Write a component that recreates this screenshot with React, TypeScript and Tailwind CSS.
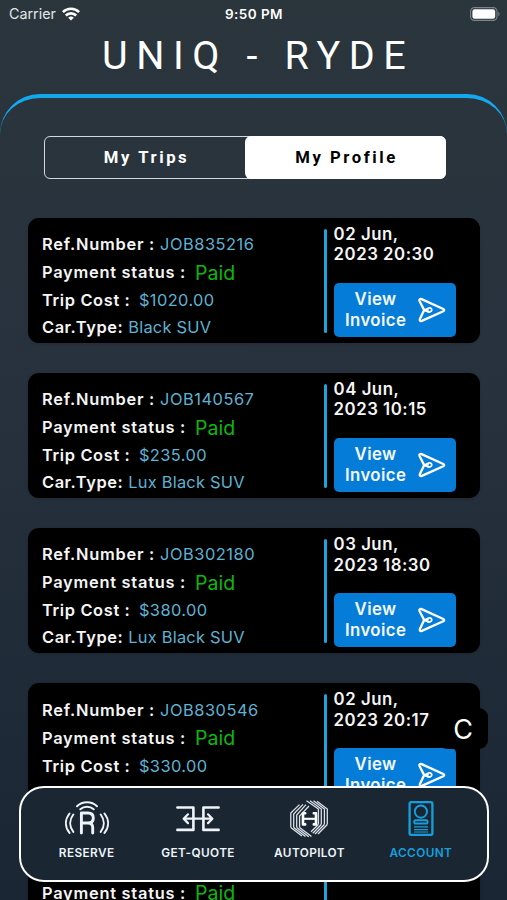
import React from "react";

type Trip = { ref: string; cost: string; car: string; day: string; time: string };

const trips: Trip[] = [
  { ref: "JOB835216", cost: "$1020.00", car: "Black SUV", day: "02 Jun,", time: "2023 20:30" },
  { ref: "JOB140567", cost: "$235.00", car: "Lux Black SUV", day: "04 Jun,", time: "2023 10:15" },
  { ref: "JOB302180", cost: "$380.00", car: "Lux Black SUV", day: "03 Jun,", time: "2023 18:30" },
  { ref: "JOB830546", cost: "$330.00", car: "Black SUV", day: "02 Jun,", time: "2023 20:17" },
  { ref: "JOB830545", cost: "$330.00", car: "Black SUV", day: "02 Jun,", time: "2023 20:15" },
];

function WifiIcon() {
  return (
    <svg className="h-[14px] w-[18px]" viewBox="0 0 18 14" fill="none" stroke="white" strokeWidth="2.6">
      <path d="M0.9 5.1a11.5 11.5 0 0 1 16.2 0" />
      <path d="M3.8 8.5a7.4 7.4 0 0 1 10.4 0" />
      <path d="M9 13.6 6.2 10.8a4 4 0 0 1 5.6 0Z" fill="white" stroke="none" />
    </svg>
  );
}

function BatteryIcon() {
  return (
    <svg className="h-[14px] w-[30px]" viewBox="0 0 30 14" fill="none">
      <rect x="0.6" y="0.6" width="26.4" height="12.8" rx="3.8" stroke="#7d858b" strokeWidth="1.1" />
      <rect x="2.4" y="2.3" width="22.8" height="9.4" rx="2.2" fill="white" />
      <path d="M28.3 4.8c1.7.7 1.7 3.7 0 4.4Z" fill="#7d858b" />
    </svg>
  );
}

function SendIcon() {
  return (
    <svg className="h-[26px] w-[30px]" viewBox="0 0 30 26" fill="none" stroke="white" strokeWidth="2.3" strokeLinejoin="round" strokeLinecap="round">
      <path d="M4.6 2.1 26.3 12c1.2.6 1.2 1.6 0 2.2L4.8 23.9c-1.6.6-2.5-.4-1.9-1.9L7.2 13.1 2.5 4C1.9 2.6 3.1 1.4 4.6 2.1Z" />
      <path d="M7.4 13.1 11.8 11c3.6-.9 4 4 .4 4-2.2 0-2.8-1.8-1.2-2.3M7.4 13.3l4.4 1.6" strokeWidth="1.8" />
    </svg>
  );
}

function ReserveIcon() {
  return (
    <svg className="h-[36px] w-[46px]" viewBox="0 0 46 36" fill="none" stroke="#eef4fa" strokeWidth="2" strokeLinecap="round">
      <path d="M13 5.3c5.4-5.3 14.6-5.3 20 0M16.3 8.2c3.7-3.4 9.7-3.4 13.4 0" />
      <path d="M5.5 12.5c-4.7 6-4.7 13.4 0 19.4M9.3 13.5c-4.1 5.4-4.1 12 0 17.4M40.5 12.5c4.7 6 4.7 13.4 0 19.4M36.7 13.5c4.1 5.4 4.1 12 0 17.4" />
      <path d="M17.4 32V12h6.6c3.3 0 5.3 1.9 5.3 5s-2 5-5.3 5h-6.6M24 22c3.4 0 4.7 1.6 4.7 4.6V32" strokeWidth="2.9" strokeLinejoin="round" />
    </svg>
  );
}

function QuoteIcon() {
  return (
    <svg className="h-[26px] w-[44px]" viewBox="0 0 44 26" fill="none" stroke="#eef4fa" strokeWidth="2.6" strokeLinecap="round" strokeLinejoin="round">
      <path d="M1.4 1.5h16v22.4h-16M42.6 1.5h-15.2v22.4h15.2" />
      <path d="M8 12.7h28M12 8.3 7.6 12.7l4.4 4.4M32 8.3l4.4 4.4-4.4 4.4" strokeWidth="2.2" />
    </svg>
  );
}

function AutopilotIcon() {
  return (
    <svg className="h-[38px] w-[38px]" viewBox="0 0 38 38" fill="none" stroke="#d9e0e7" strokeWidth="1.3">
      <path d="M.8 27.5V13L9.5 4.6M3.7 27.5V14L13 4.4M6.7 27.5V15L16 4.6M9.6 27.5V16L19 6" />
      <path d="M.8 27.5 12 36M3.7 27.5 15.5 36.6M6.7 27.5 18.8 36.8M9.6 27.5 21.5 36.6" />
      <path d="M16.5.8 28.4 9V24.5M20 .8 31.3 9V24.5M23.5.8 34.4 9V24.5M27 1.2 37.3 9V24.5" />
      <path d="M28.4 24.5 21 31.8M31.3 24.5 22.8 33.2M34.4 24.5 25 34M37.3 24.5 28 34" />
      <path d="M15.2 13.2H13v11.2h2.2M23.8 13.2H26v11.2h-2.2" stroke="#fff" strokeWidth="2.6" strokeLinejoin="round" strokeLinecap="round" />
      <path d="M13 18.8h13" stroke="#fff" strokeWidth="2.1" />
    </svg>
  );
}

function AccountIcon() {
  return (
    <svg className="h-[36px] w-[26px]" viewBox="0 0 26 36" fill="none" stroke="#169fdc" strokeWidth="1.9">
      <rect x="1.6" y="1.2" width="22.8" height="32.6" rx="1.5" strokeWidth="2.3" />
      <circle cx="12.9" cy="10.6" r="6.1" />
      <rect x="6.2" y="19.3" width="13.4" height="3.2" rx="1.6" />
      <path d="M6 25.9h14M6 28.6h14M6 31h14" strokeWidth="1.2" />
    </svg>
  );
}

function TripCard({ trip }: { trip: Trip }) {
  return (
    <article className="flex h-[125.6px] shrink-0 rounded-[11px] bg-black pl-[14px] text-[16.4px] shadow-sm">
      <div className="w-[281.6px] pt-[12.6px] text-[#5eb2d3]">
        <p className="h-[28px] leading-[28px] tracking-[0.52px]">
          <span className="mr-[5px] font-semibold tracking-[0.77px] text-[#f5f5f5]">Ref.Number :</span>
          {trip.ref}
        </p>
        <p className="flex h-[28px] items-center leading-[28px]">
          <span className="mr-[9px] font-semibold tracking-[0.75px] text-[#f5f5f5]">Payment status :</span>
          <span className="pt-px text-[19.5px] tracking-[0.05px] text-[#0cb80c]">Paid</span>
        </p>
        <p className="h-[28px] leading-[28px] tracking-[0.4px]">
          <span className="mr-[8.5px] font-semibold tracking-[0.64px] text-[#f5f5f5]">Trip Cost :</span>
          {trip.cost}
        </p>
        <p className="h-[28px] leading-[26px] tracking-[0.25px]">
          <span className="mr-[5px] font-semibold tracking-[0.55px] text-[#f5f5f5]">Car.Type:</span>
          {trip.car}
        </p>
      </div>
      <div className="mt-[11px] h-[104px] w-[3px] shrink-0 rounded-full bg-[#1ba5dc]" />
      <div className="ml-[7px] pt-[6px]">
        <p className="h-[42px] text-[16.8px] leading-[20.8px] font-semibold tracking-[0.52px] text-[#f5f5f5]">
          {trip.day}
          <br />
          {trip.time}
        </p>
        <button className="mt-[17.3px] flex h-[54px] w-[122.4px] items-center rounded-[5px] bg-[#057cd8] pl-[11px] text-[16.8px] leading-[21px] font-semibold tracking-[0.4px] text-[#f3f8fc]">
          <span className="w-[62px] text-center">
            View
            <br />
            Invoice
          </span>
          <span className="ml-[10px]">
            <SendIcon />
          </span>
        </button>
      </div>
    </article>
  );
}

const tabs = [
  { label: "RESERVE", icon: <ReserveIcon />, color: "text-[#eef4fa]" },
  { label: "GET-QUOTE", icon: <QuoteIcon />, color: "text-[#eef4fa]" },
  { label: "AUTOPILOT", icon: <AutopilotIcon />, color: "text-[#eef4fa]" },
  { label: "ACCOUNT", icon: <AccountIcon />, color: "text-[#169fdc]" },
];

export default function App() {
  return (
    <div className="relative flex h-[900px] w-[507px] flex-col overflow-hidden bg-linear-to-b from-[#2b353c] via-[#28323e] via-40% to-[#1a2634] font-['Inter',sans-serif]">
      <header className="h-[94px] shrink-0">
        <div className="grid h-[28px] grid-cols-3 items-center px-[9px] text-[13.5px] text-white">
          <div className="flex items-center gap-[6px] text-[14.3px] text-[#e2e6e9]">
            Carrier
            <WifiIcon />
          </div>
          <div className="pl-px text-center font-semibold tracking-[0.45px]">9:50 PM</div>
          <div className="-mr-[2px] flex justify-end">
            <BatteryIcon />
          </div>
        </div>
        <h1 className="pl-[102px] font-['Roboto',sans-serif] text-[39.5px] leading-[56px] font-normal tracking-[8.6px] whitespace-nowrap text-white">
          UNIQ - RYDE
        </h1>
      </header>

      <main className="flex min-h-0 flex-1 flex-col overflow-hidden rounded-t-[40px] border-t-4 border-[#14a8ec]">
        <div className="mt-[38px] ml-[44px] flex h-[43px] w-[402px] shrink-0 rounded-[6px] border border-[#d5d8da] font-['Roboto',sans-serif] text-[16.7px] leading-[40px] font-bold tracking-[2.55px]">
          <button className="flex-1 pl-[3px] text-white">My Trips</button>
          <button className="-my-px -mr-px w-[201px] rounded-[6px] bg-white pl-[2px] text-black">My Profile</button>
        </div>
        <div className="mt-[38.5px] flex w-[480px] flex-col gap-[29.6px] pl-[28px]">
          {trips.map((trip) => (
            <TripCard key={trip.ref} trip={trip} />
          ))}
        </div>
      </main>

      <div className="absolute top-[708px] left-[438px] flex h-[41px] w-[50px] items-center justify-center rounded-[9px] bg-black pt-[3px] text-[27px] text-white">
        C
      </div>

      <nav className="absolute top-[786px] left-[19px] flex h-[96px] w-[470px] rounded-[25px] border-[2.5px] border-white bg-[#1a2632] pl-[10px]">
        {tabs.map((tab) => (
          <a key={tab.label} className={`flex w-[111.4px] flex-col items-center pt-[11px] ${tab.color}`}>
            <span className="flex h-[40px] items-center">{tab.icon}</span>
            <span className="mt-[6px] text-[11.8px] leading-[16px] font-semibold tracking-[0.4px]">{tab.label}</span>
          </a>
        ))}
      </nav>
    </div>
  );
}
